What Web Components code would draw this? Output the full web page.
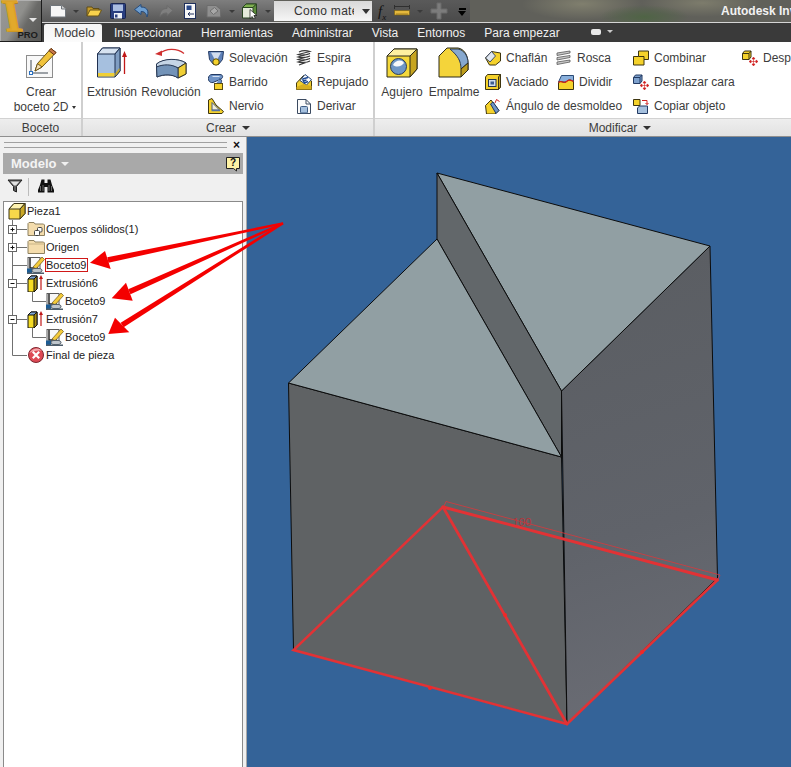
<!DOCTYPE html>
<html lang="es">
<head>
<meta charset="utf-8">
<title>Autodesk Inventor</title>
<style>
  html, body { margin: 0; padding: 0; height: 100%; overflow: hidden; background: #f0f0f0; }
  body { font: 12px "Liberation Sans", Arial, sans-serif; color: #3c3c3c; }
</style>
</head>
<body>
<inv-app>
  <inv-appbar slot="bar"></inv-appbar>

  <inv-ribbon slot="ribbon">
    <inv-ribbon-panel label="Boceto" width="81">
      <inv-big-button icon="sketch" pad="14" dropdown>Crear<br>boceto 2D</inv-big-button>
    </inv-ribbon-panel>

    <inv-ribbon-panel label="Crear" width="290" menu>
      <inv-big-button icon="extrude" width="48" left="5">Extrusión</inv-big-button>
      <inv-big-button icon="revolve" width="58" left="6">Revolución</inv-big-button>
      <inv-tool-grid columns="88px 72px" left="8">
        <inv-tool icon="loft">Solevación</inv-tool>
        <inv-tool icon="coil">Espira</inv-tool>
        <inv-tool icon="sweep">Barrido</inv-tool>
        <inv-tool icon="emboss">Repujado</inv-tool>
        <inv-tool icon="rib">Nervio</inv-tool>
        <inv-tool icon="derive">Derivar</inv-tool>
      </inv-tool-grid>
    </inv-ribbon-panel>

    <inv-ribbon-panel label="Modificar" width="490" menu>
      <inv-big-button icon="hole" width="42" left="6">Agujero</inv-big-button>
      <inv-big-button icon="fillet" width="50" left="6">Empalme</inv-big-button>
      <inv-tool-grid columns="71px 77px 109px 60px" left="6">
        <inv-tool icon="chamfer">Chaflán</inv-tool>
        <inv-tool icon="thread">Rosca</inv-tool>
        <inv-tool icon="combine">Combinar</inv-tool>
        <inv-tool icon="moveyellow">Desplazar cara</inv-tool>
        <inv-tool icon="shell" style="grid-column: 1">Vaciado</inv-tool>
        <inv-tool icon="split" style="margin-left: 2px">Dividir</inv-tool>
        <inv-tool icon="moveface">Desplazar cara</inv-tool>
        <inv-tool icon="draft" style="grid-column: 1 / span 2">Ángulo de desmoldeo</inv-tool>
        <inv-tool icon="copy">Copiar objeto</inv-tool>
      </inv-tool-grid>
    </inv-ribbon-panel>
  </inv-ribbon>

  <inv-browser slot="side">
    <inv-tree-row depth="0" icon="part">Pieza1</inv-tree-row>
    <inv-tree-row depth="1" icon="solids" toggle="+">Cuerpos sólidos(1)</inv-tree-row>
    <inv-tree-row depth="1" icon="folder" toggle="+">Origen</inv-tree-row>
    <inv-tree-row depth="1" icon="treesketch" selected>Boceto9</inv-tree-row>
    <inv-tree-row depth="1" icon="treeextrude" toggle="-">Extrusión6</inv-tree-row>
    <inv-tree-row depth="2" icon="treesketch">Boceto9</inv-tree-row>
    <inv-tree-row depth="1" icon="treeextrude" toggle="-">Extrusión7</inv-tree-row>
    <inv-tree-row depth="2" icon="treesketch">Boceto9</inv-tree-row>
    <inv-tree-row depth="1" icon="endpart" last>Final de pieza</inv-tree-row>
  </inv-browser>

  <inv-viewport slot="view"></inv-viewport>
  <inv-callouts slot="over"></inv-callouts>
</inv-app>

<script>
// icon library, all drawn on a 16, 18 or 32 unit box
const ICONS = {
  doc: [16, '<path d="M.5 2.500h11l4 3.500v8H.5z" fill="#f6f6f6" stroke="#70767c"/><path d="M11.500 2.500V6h4" fill="#d4d4d4" stroke="#70767c"/>'],
  open: [16, '<path d="M1 13V4h5l1 1.500h6V8" fill="#c49a2a" stroke="#5f4d18"/><path d="M1 13l3-6h11.500l-3 6z" fill="#f8d24c" stroke="#6a5518"/>'],
  save: [16, '<rect x=".5" y=".5" width="15" height="15" rx="1" fill="#2a3f80" stroke="#18244e"/><rect x="3" y="1.500" width="10" height="6.500" fill="#a9bce0"/><rect x="4" y="10" width="8" height="5.500" fill="#eef1f6"/><rect x="5" y="11.500" width="2.500" height="3" fill="#2a3f80"/>'],
  undo: [16, '<path d="M7 1.500L.5 6.500 7 11.500V8.500c3 0 5 1 6 5.500 2-5 1-10-6-10z" fill="#6d9ed0" stroke="#254a7a"/>'],
  redo: [16, '<path d="M9 2.500l6 5-6 5V10c-3 0-5 .5-7 3.500 0-5 2-8 7-8z" fill="#7f7f7f" stroke="#6b6b6b"/>'],
  update: [16, '<rect x="2.500" y=".5" width="11" height="15" fill="#f8f8f8" stroke="#20305c"/><rect x="4.500" y="2.500" width="5" height="4.500" fill="#2c4a8a"/><path d="M12 11H6M6 11l2-1.800M6 11l2 1.800" stroke="#20305c" fill="none"/>'],
  rebuild: [16, '<path d="M1 2.500h9l4.500 4v7.500H1z" fill="#8f8f8f" stroke="#6d6d6d"/><path d="M4 8l4.500-3.500 3.500 3.500-4.500 3.500z" fill="#a8a8a8" stroke="#707070"/>'],
  selectbox: [16, '<path d="M.5 4.500L4 1h10.500v9.500L11 15H.5z" fill="#e5eadb" stroke="#2a4522"/><path d="M.5 4.500L4 1h10.500L11 4.500z" fill="#7fb04f" stroke="#2a4522"/><path d="M11 4.500L14.500 1v9.500L11 15z" fill="#5c8c3a" stroke="#2a4522"/><path d="M8 6.500v9l2.200-2 1.500 2.500 1.500-.7-1.300-2.800h3z" fill="#fff" stroke="#111" stroke-width=".7"/>'],
  ruler: [16, '<path d="M.5 3.500h15M.5 2v4M15.500 2v4" stroke="#2f2f2f" fill="none"/><rect x=".5" y="7.500" width="15" height="4.500" fill="#e5b93c" stroke="#7a6010" stroke-width=".6"/><path d="M3 10v2M5 10v2M7 10v2M9 10v2M11 10v2M13 10v2" stroke="#7a5a10" stroke-width=".6"/>'],
  plus: [18, '<path d="M7 1h4v6h6v4h-6v6H7v-6H1V7h6z" fill="#7c7c7c" stroke="#6b6b6b"/>'],

  sketch: [32, '<rect x="1.500" y="8.500" width="26" height="22" fill="#f8f8f8" stroke="#8d8d8d"/><path d="M6 13v13h17" fill="none" stroke="#404a55"/><rect x="4.500" y="24.500" width="3" height="3" fill="#fff" stroke="#2a70c0"/><path d="M10 24l2.500-7.500L26 1.500l5 4L17 20z" fill="#f1c33b" stroke="#6a5315"/><path d="M10 24l2.500-7.500L17 20z" fill="#f3ddb0" stroke="#6a5315"/><path d="M26 1.500l5 4-2 2.200-5-4z" fill="#c97a4b" stroke="#6a3515"/>'],
  extrude: [32, '<path d="M1.500 7l5-6h17.500v23l-5 6H1.500z" fill="#a6c0df" stroke="#1f3050"/><path d="M1.500 7l5-6h17.500l-5 6z" fill="#d6e2f0" stroke="#1f3050"/><path d="M19 7l5-6v23l-5 6z" fill="#7f9dc2" stroke="#1f3050"/><path d="M2 26h16.500v3.500H2z" fill="#f0cf35"/><path d="M19.500 26l4-5v3l-4 5z" fill="#c9a820"/><path d="M28.500 27V8" stroke="#c01818" stroke-width="1.300"/><path d="M26 10l2.500-6 2.500 6z" fill="#c01818"/>'],
  revolve: [32, '<path d="M4 7C11 1 22 1 29 6.500" fill="none" stroke="#d03030" stroke-width="1.300"/><path d="M0 7l7-3.500V9z" fill="#d03030"/><path d="M1.500 17c6-5 22-6 29.500-1v11l-8 4c-5-4-14-4-21-1z" fill="#85a5c8" stroke="#2a3a55"/><path d="M1.500 17c7-6 22-6 29.500-1l-8 5c-6-3-14-3-21.500-1z" fill="#c5d5e6" stroke="#2a3a55"/><path d="M23 21l8-5v11l-8 4z" fill="#f0cf35" stroke="#3a3520"/><path d="M1.500 20c7-3 15-3 21.500 1v10c-6-4-14-4-21-1z" fill="#7393b8" stroke="#2a3a55"/>'],
  hole: [32, '<path d="M1 9l7-7h23v20l-7 8H1z" fill="#f4d83a" stroke="#2d2a18"/><path d="M1 9l7-7h23l-7 7z" fill="#fdf0a0" stroke="#2d2a18"/><path d="M24 9l7-7v20l-7 8z" fill="#c7a520" stroke="#2d2a18"/><circle cx="12.500" cy="19.500" r="8" fill="#6d96c6" stroke="#2d3d55"/><path d="M7 18c2-5 9-6 11-2-2 3-7 5-11 2z" fill="#f7f9fb"/>'],
  fillet: [32, '<path d="M1 30V9L9 1h11c6 1 10 7 10 15v7l-7 7z" fill="#f4d43a" stroke="#2d2a18"/><path d="M12 2h8c6 1 10 7 10 14l-7 6c0-8-3-13-11-20z" fill="#86a8cf" stroke="#2d3d55"/><path d="M23 22l7-6v7l-7 7z" fill="#bd9c1c" stroke="#2d2a18"/>'],

  loft: [16, '<path d="M.5 1.500h15l-1 8-4 5H5.500l-4-5z" fill="#5f82ba" stroke="#233a63"/><path d="M3 2.500h10L9.500 9h-3z" fill="#d2ddee"/><circle cx="8" cy="12" r="3.200" fill="#f5d22b" stroke="#5a4c10"/>'],
  sweep: [16, '<path d="M4 .5h8c3.500 0 3.500 4 0 5L5 8.500c-6 1-6-8-1-8z" fill="#6f93c6" stroke="#223a63"/><path d="M4.500 2.500h7" stroke="#d4e0f0"/><path d="M11 5c3 0 3.500 3 1 5H8" fill="#6f93c6" stroke="#223a63"/><rect x="6.500" y="9.500" width="8" height="6" fill="#f5d22b" stroke="#5a4c10"/>'],
  rib: [16, '<path d="M.5 15.500V2l3.500-1.500 4 6.500 7.500 6.500-1.500 2z" fill="#f5d22b" stroke="#3d3510"/><path d="M4 4.500V12h7.500z" fill="#efedd9" stroke="#4a5a78"/><path d="M3.500 12.500h8.500" stroke="#5573a4" stroke-width="1.500"/>'],
  coil: [16, '<path d="M3 2c3-1.500 8-1.500 11-.5L2 4.500c3 1 9 .5 12-1L2 7c3 1 9 .5 12-1L2 9.500c3 1 9 .5 12-1L2 12c3 1 9 .5 12-1L3 15" fill="none" stroke="#3a3a3a" stroke-width="1.200"/>'],
  emboss: [16, '<path d="M.5 15.500V9l7-7.500 8 5.500v8.500z" fill="#f1cf30" stroke="#463c10"/><path d="M4 6.500l5-6 6.500 5-5 5.500z" fill="#fff" stroke="#24467a"/><path d="M6.500 5l5.500-1.500M6.500 5l2 4 3.500-1.500M7.500 7l3-1" stroke="#1e4a94" stroke-width="1.500" fill="none"/><path d="M.5 13l7-3 8 2v3.500H.5z" fill="#d8b020"/>'],
  derive: [16, '<path d="M1.500 15.500v-14h8.500l4.500 4.500v9.500z" fill="#fbfbfb" stroke="#3b4a60"/><path d="M10 1.500v4.500h4.500" fill="none" stroke="#3b4a60"/><rect x="4.500" y="8.500" width="7" height="6.500" rx="1" fill="#a5c0de" stroke="#3f5d85"/>'],
  chamfer: [16, '<path d="M.5 8l6-6.500 9 1.500v8l-5 4h-6z" fill="#f5d22b" stroke="#3d3510"/><path d="M.5 8l6-6.500 4 4.500-5.500 6z" fill="#dfe6ef" stroke="#3d4a63"/>'],
  thread: [16, '<path d="M1 3l13-2v2L1 5.500zM1 7.500l13-2v2L1 10zM1 12l13-2v2L1 14.500z" fill="#c9c9c9" stroke="#575757" stroke-width=".8"/>'],
  shell: [16, '<path d="M.5 3l2-2.500h13V13l-2 2.500H.5z" fill="#f5d22b" stroke="#3d3510"/><path d="M13.500 3l2-2.500V13l-2 2.500z" fill="#c7a520" stroke="#3d3510"/><rect x="3.500" y="5.500" width="7.500" height="7" fill="#cfdced" stroke="#25364f"/><rect x="5.500" y="7.500" width="3.500" height="3" fill="#3f5f8f"/>'],
  split: [16, '<path d="M.5 8l3-6.500h12V8z" fill="#8ab0dc" stroke="#2a4a75"/><path d="M.5 15.500V8.500c3-3 5 2 8-1s5-1 7 0v8z" fill="#f5d22b" stroke="#3d3510"/><path d="M.5 8.500c3-3 5 2 8-1s5-1 7 0" fill="none" stroke="#d02020" stroke-width="1.300"/>'],
  draft: [16, '<path d="M.5 7.500L6 2l8 10.500-4 3.500H1.500z" fill="#f5d22b" stroke="#3d3510"/><path d="M5.500 6L8 4l6 8.500-3 3z" fill="#6f93c6" stroke="#223a63"/><path d="M10 5l1.500-3.500L14.500 3.500" fill="none" stroke="#d02020"/>'],
  combine: [16, '<path d="M5.500 1h10v8.500h-4.500v5.500H.5V6.500H5.500z" fill="#f5d22b" stroke="#3d3510"/><path d="M5.500 6.500H11v3" fill="none" stroke="#3d3510"/>'],
  moveface: [16, '<path d="M.5 3.500l2-2.500h6.500v6l-2 2.500H.5z" fill="#7da0cc" stroke="#223a63"/><path d="M.5 3.500h6.500v6M7 3.500L9 1" fill="none" stroke="#223a63"/><path d="M11.500 8v7M8 11.500h7M11.500 7l-1.500 2h3zM11.500 16l-1.500-2h3zM7 11.500l2-1.500v3zM16 11.500l-2-1.500v3z" fill="#d02020" stroke="#d02020" stroke-width=".6"/>'],
  moveyellow: [16, '<path d="M.5 3.500l2-2.500h6.500v6l-2 2.500H.5z" fill="#f5d22b" stroke="#3d3510"/><path d="M.5 3.500h6.500v6M7 3.500L9 1" fill="none" stroke="#3d3510"/><path d="M11.500 8v7M8 11.500h7M11.500 7l-1.500 2h3zM11.500 16l-1.500-2h3zM7 11.500l2-1.500v3zM16 11.500l-2-1.500v3z" fill="#d02020" stroke="#d02020" stroke-width=".6"/>'],
  copy: [16, '<path d="M.5 7.500V1.500h6.500v6z" fill="#f5d22b" stroke="#3d3510"/><path d="M4.500 10l2-2h8v7.500H4.500z" fill="#a5c0de" stroke="#223a63"/><path d="M9 2.500h5V6.500M14 6.500l-1.500-1.500M14 6.500l1.500-1.500" fill="none" stroke="#d02020"/>'],

  part: [18, '<path d="M1 7l5-5.500h11v10l-5 5.500H1z" fill="#f6d84a" stroke="#3b3518"/><path d="M1 7l5-5.500h11L12 7z" fill="#fdf2b0" stroke="#3b3518"/><path d="M12 7l5-5.500v10L12 17z" fill="#c9a827" stroke="#3b3518"/>'],
  folder: [18, '<path d="M1 15.500V3.500l1-1h5l1 1.500h8.500l1 1v10.500z" fill="#f4dcac" stroke="#8e8160"/><path d="M1 6h16.500" stroke="#c9b487"/>'],
  solids: [18, '<path d="M1 15.500V3.500l1-1h5l1 1.500h8.500l1 1v10.500z" fill="#f4dcac" stroke="#8e8160"/><rect x="10.500" y="7.500" width="4.500" height="4.500" fill="#fff" stroke="#444" rx="1"/><rect x="7.500" y="10.500" width="5" height="5" fill="#fff" stroke="#444" rx="1"/>'],
  treesketch: [18, '<rect x="1" y="1.500" width="12" height="13" fill="#f8f8f8" stroke="#5b5b5b"/><path d="M3 2v10h8" stroke="#282828" stroke-width="1.500" fill="none"/><path d="M6 11L15 1l2.500 2.500L9 13z" fill="#f4cb3a" stroke="#6a5315" stroke-width=".7"/><rect x="0" y="12.500" width="5" height="5" fill="#1c5c94"/><ellipse cx="10" cy="14.500" rx="5" ry="2.200" fill="#bfc6cc" stroke="#4a5560"/><rect x="0" y="16.500" width="17" height="1.500" fill="#4d5d6b"/>'],
  treeextrude: [18, '<path d="M1 5l3-3h6v13l-3 3H1z" fill="#f5dc25" stroke="#111"/><path d="M1 5l3-3h6L7 5z" fill="#7da7d6" stroke="#111"/><path d="M7 5l3-3v13l-3 3z" fill="#a58a10" stroke="#111"/><path d="M14 16V4" stroke="#c01818" stroke-width="1.200"/><path d="M12 5l2-4 2 4z" fill="#c01818"/>'],
  endpart: [18, '<circle cx="9" cy="9" r="7.500" fill="#dd4a55" stroke="#7d2730"/><path d="M2.500 7C5 2 12 1 15 5c-4-1-9 0-12.500 2z" fill="#f3a9ae"/><path d="M5.800 5.800l6.400 6.400M12.200 5.800l-6.400 6.400" stroke="#fff" stroke-width="2.200"/>'],
  filter: [16, '<path d="M1 2h14L9.500 8.500V14l-3-1.500v-4z" fill="#5b5b5b" stroke="#222"/><path d="M3.500 3.500h9l-3.500 4h-2z" fill="#e2e2e2"/>'],
  binoculars: [16, '<path d="M3.500 1.500h3v3.500h3V1.500h3l1.500 5.500 2 5v2.500H9.500V9h-3v5.500H0V12l2-5z" fill="#111"/><path d="M2.500 8v5M5 7v6M11 7v6M13.500 8v5" stroke="#8f8f8f" stroke-width=".7"/>'],
  help: [16, '<path d="M1.500 1.500h13v11h-3v2.500l-3-2.500h-7z" fill="#fff3a5" stroke="#222"/>'],
};

class InvIcon extends HTMLElement {
  connectedCallback() {
    const [box, body] = ICONS[this.getAttribute('name')] || [16, ''];
    const shadow = this.attachShadow({ mode: 'open' });
    shadow.innerHTML = `
      <style>
        :host { display: block; width: ${box}px; height: ${box}px; flex: none; }
        svg { display: block; }
      </style>
      <svg width="${box}" height="${box}" viewBox="0 0 ${box} ${box}">${body}</svg>
    `;
  }
}
customElements.define('inv-icon', InvIcon);

class InvApp extends HTMLElement {
  connectedCallback() {
    const shadow = this.attachShadow({ mode: 'open' });
    shadow.innerHTML = `
      <style>
        :host { display: flex; flex-direction: column; width: 791px; height: 767px; overflow: hidden; }
        .main { position: relative; flex: 1; display: flex; min-height: 0; }
        ::slotted([slot="over"]) { position: absolute; inset: 0; pointer-events: none; }
      </style>
      <slot name="bar"></slot>
      <slot name="ribbon"></slot>
      <div class="main">
        <slot name="side"></slot>
        <slot name="view"></slot>
        <slot name="over"></slot>
      </div>
    `;
  }
}
customElements.define('inv-app', InvApp);

class InvAppbar extends HTMLElement {
  connectedCallback() {
    const shadow = this.attachShadow({ mode: 'open' });
    const caret = '<i class="caret"></i>';
    const tabs = ['Inspeccionar', 'Herramientas', 'Administrar', 'Vista', 'Entornos', 'Para empezar'];
    shadow.innerHTML = `
      <style>
        :host { display: grid; grid-template-columns: 42px 1fr; grid-template-rows: 23px 19px; height: 42px; background: #3a3a3a; flex: none; }
        .logo { grid-row: 1 / span 2; position: relative; overflow: hidden; box-sizing: border-box;
          background: linear-gradient(120deg, #9a9a98 0%, #8f8f8c 45%, #6a6a68 62%, #585856 100%);
          border-right: 1px solid #1c1c1c; border-bottom: 1px solid #1c1c1c; box-shadow: inset 1px 1px 0 #b0b0b0; }
        .glyph { position: absolute; left: 3px; top: -8px; font: bold 46px/48px "Liberation Serif", serif; color: #e2a92c;
          -webkit-text-stroke: 1.500px #dda326; transform: skewX(10deg); text-shadow: 1px 1px 0 #7c5a10; }
        .pro { position: absolute; right: 3px; bottom: 1px; font: bold 9.500px/11px "Liberation Sans", sans-serif; color: #1c1c1c; }
        .logo .drop { position: absolute; right: 4px; top: 18px; border: 4px solid transparent; border-top: 4px solid #e5e5e5; border-bottom: 0; }
        .quick { display: flex; align-items: center; height: 23px; box-sizing: border-box; border-bottom: 1px solid #d5d5d5; overflow: hidden; min-width: 0;
          background:
            radial-gradient(ellipse 45px 12px at 602px 17px, #4f6445 0%, rgba(79,100,69,0) 100%),
            radial-gradient(ellipse 60px 16px at 540px 4px, #807f6e 0%, rgba(128,127,110,0) 100%),
            radial-gradient(ellipse 60px 14px at 660px 3px, #7d7c6c 0%, rgba(125,124,108,0) 100%),
            #60605a; }
        .tools { display: flex; align-items: center; height: 22px; padding-left: 8px; width: 232px; box-sizing: border-box; gap: 8px; flex: none;
          background: linear-gradient(#7e7e7e, #575757); }
        .caret { display: block; border: 3px solid transparent; border-top: 3px solid #3a3a3a; border-bottom: 0; flex: none; margin: 0 -1px; }
        .combo { width: 98px; height: 20px; box-sizing: border-box; flex: none; position: relative; padding-left: 20px;
          background: linear-gradient(#d8d8d8, #f6f6f6); line-height: 20px; color: #333; overflow: hidden; white-space: nowrap; letter-spacing: .3px; }
        .combo .label { display: block; width: 60px; overflow: hidden; }
        .combo::after { content: ""; position: absolute; right: 2px; top: 8px; border: 4px solid transparent; border-top: 5px solid #333; border-bottom: 0; }
        .tools2 { display: flex; align-items: center; gap: 8px; height: 22px; padding: 0 4px 0 6px; width: 98px; box-sizing: border-box; flex: none; background: linear-gradient(#5a5a5a, #4a4a4a); }
        .fx { font: italic 15px/16px "Liberation Serif", serif; color: #111; width: 16px; white-space: nowrap; }
        .fx sub { font-size: 9px; line-height: 0; }
        .more { border-top: 2px solid #000; width: 7px; height: 7px; box-sizing: border-box; position: relative; flex: none; margin-left: 3px; }
        .more::after { content: ""; position: absolute; left: -1px; top: 1px; border: 4px solid transparent; border-top: 5px solid #000; border-bottom: 0; }
        .title { margin-left: auto; white-space: nowrap; color: #f2f2f2; font: bold 12px/22px "Liberation Sans", sans-serif; width: 70px; flex: none; overflow: hidden; }
        .tabs { display: flex; align-items: flex-end; height: 19px; color: #f0f0f0; white-space: nowrap; overflow: hidden; }
        .tab { line-height: 18px; margin-left: 19px; }
        .tab.active { margin-left: 2px; padding: 0 8px 0 10px; height: 18px; width: 40px; background: linear-gradient(#f4f4f4, #fbfbfb); color: #3e3e3e; border-radius: 2px 2px 0 0; font-size: 12.500px; }
        .tab.active + .tab { margin-left: 12px; }
        .pill { margin: 0 0 7px 31px; width: 10px; height: 6px; border-radius: 2px; background: #e8e8e8; position: relative; }
        .pill::after { content: ""; position: absolute; left: 16px; top: 1px; border: 3px solid transparent; border-top: 3px solid #ccc; border-bottom: 0; }
      </style>
      <div class="logo"><span class="glyph">I</span><span class="drop"></span><span class="pro">PRO</span></div>
      <div class="quick">
        <div class="tools">
          <inv-icon name="doc"></inv-icon>${caret}
          <inv-icon name="open"></inv-icon>
          <inv-icon name="save"></inv-icon>
          <inv-icon name="undo"></inv-icon>
          <inv-icon name="redo"></inv-icon>
          <inv-icon name="update"></inv-icon>
          <inv-icon name="rebuild"></inv-icon>${caret}
          <inv-icon name="selectbox"></inv-icon>${caret}
        </div>
        <div class="combo"><span class="label">Como mate</span></div>
        <div class="tools2">
          <span class="fx">f<sub>x</sub></span>
          <inv-icon name="ruler"></inv-icon>${caret}
          <inv-icon name="plus"></inv-icon>
          <span class="more"></span>
        </div>
        <div class="title">Autodesk Inventor</div>
      </div>
      <div class="tabs">
        <div class="tab active">Modelo</div>
        ${tabs.map((t) => `<div class="tab">${t}</div>`).join('')}
        <div class="pill"></div>
      </div>
    `;
  }
}
customElements.define('inv-appbar', InvAppbar);

class InvRibbon extends HTMLElement {
  connectedCallback() {
    const shadow = this.attachShadow({ mode: 'open' });
    shadow.innerHTML = `
      <style>
        :host { display: flex; height: 95px; flex: none; overflow: hidden; gap: 2px; background: #cfcfcf; box-sizing: border-box; border-bottom: 1px solid #8f8f8f; }
      </style>
      <slot></slot>
    `;
  }
}
customElements.define('inv-ribbon', InvRibbon);

class InvRibbonPanel extends HTMLElement {
  connectedCallback() {
    const label = this.getAttribute('label');
    const menu = this.hasAttribute('menu');
    const shadow = this.attachShadow({ mode: 'open' });
    shadow.innerHTML = `
      <style>
        :host { display: flex; flex-direction: column; flex: none; width: ${this.getAttribute('width')}px; background: #fff; }
        .body { flex: 1; display: flex; align-items: flex-start; padding-top: 4px; box-sizing: border-box; min-height: 0; }
        .foot { height: 18px; border-top: 1px solid #d2d2d2; background: linear-gradient(#eeeeee, #e2e2e2); display: flex; align-items: center; justify-content: center; gap: 6px; color: #3c3c3c; box-sizing: border-box; flex: none; }
        .arrow { border: 4px solid transparent; border-top: 4px solid #333; border-bottom: 0; }
      </style>
      <div class="body"><slot></slot></div>
      <div class="foot"><span>${label}</span>${menu ? '<span class="arrow"></span>' : ''}</div>
    `;
  }
}
customElements.define('inv-ribbon-panel', InvRibbonPanel);

class InvBigButton extends HTMLElement {
  connectedCallback() {
    const width = this.getAttribute('width');
    const left = this.getAttribute('left') || 0;
    const pad = this.getAttribute('pad');
    const shadow = this.attachShadow({ mode: 'open' });
    shadow.innerHTML = `
      <style>
        :host { display: flex; flex-direction: column; align-items: center; flex: none; margin-left: ${left}px; padding-top: 1px;
          ${width ? `width: ${width}px;` : `margin-left: ${pad}px; width: 54px;`} }
        .label { margin-top: 6px; line-height: 15px; text-align: center; white-space: nowrap; position: relative; }
        .drop { position: absolute; right: -8px; bottom: 6px; border: 2.500px solid transparent; border-top: 3px solid #333; border-bottom: 0; }
      </style>
      <inv-icon name="${this.getAttribute('icon')}"></inv-icon>
      <div class="label"><slot></slot>${this.hasAttribute('dropdown') ? '<span class="drop"></span>' : ''}</div>
    `;
  }
}
customElements.define('inv-big-button', InvBigButton);

class InvToolGrid extends HTMLElement {
  connectedCallback() {
    const shadow = this.attachShadow({ mode: 'open' });
    shadow.innerHTML = `
      <style>
        :host { display: grid; grid-template-columns: ${this.getAttribute('columns')}; grid-auto-rows: 24px; flex: none; margin-left: ${this.getAttribute('left') || 0}px; }
      </style>
      <slot></slot>
    `;
  }
}
customElements.define('inv-tool-grid', InvToolGrid);

class InvTool extends HTMLElement {
  connectedCallback() {
    const shadow = this.attachShadow({ mode: 'open' });
    shadow.innerHTML = `
      <style>
        :host { display: flex; align-items: center; gap: 5px; white-space: nowrap; height: 24px; }
      </style>
      <inv-icon name="${this.getAttribute('icon')}"></inv-icon>
      <slot></slot>
    `;
  }
}
customElements.define('inv-tool', InvTool);

class InvBrowser extends HTMLElement {
  connectedCallback() {
    const shadow = this.attachShadow({ mode: 'open' });
    shadow.innerHTML = `
      <style>
        :host { display: flex; flex-direction: column; flex: none; width: 247px; background: #f0f0f0; box-sizing: border-box; padding: 0 3px 0 3px; border-right: 1px solid #a8a8a8; }
        .grip { display: flex; align-items: center; height: 16px; gap: 5px; }
        .lines { flex: 1; height: 4px; margin: 0 0 0 1px; border-top: 1px solid #a0a0a0; border-bottom: 1px solid #a0a0a0; }
        .close { width: 9px; margin: 0 2px 0 0; font: bold 12px/12px "Liberation Sans", sans-serif; color: #111; text-align: center; }
        .head { display: flex; align-items: center; height: 21px; background: #a9a9a9; color: #f4f4f4; font: bold 13px/21px "Liberation Sans", sans-serif; padding: 0 2px 0 8px; gap: 4px; }
        .head .arrow { border: 4px solid transparent; border-top: 4.500px solid #f0f0f0; border-bottom: 0; margin-top: 1px; }
        .help { margin-left: auto; position: relative; width: 16px; height: 16px; }
        .help b { position: absolute; inset: 0; text-align: center; font: bold 10px/13px "Liberation Sans", sans-serif; color: #111; }
        .bar { display: flex; align-items: flex-start; height: 27px; padding: 4px 0 0 4px; box-sizing: border-box; }
        .sep { width: 1px; height: 18px; background: #bcbcbc; margin: 0 9px 0 5px; }
        .tree { flex: 1; background: #fff; border: 1px solid #8a8a8a; border-bottom: 0; }
      </style>
      <div class="grip"><div class="lines"></div><div class="close">×</div></div>
      <div class="head"><span>Modelo</span><span class="arrow"></span>
        <span class="help"><inv-icon name="help"></inv-icon><b>?</b></span></div>
      <div class="bar"><inv-icon name="filter"></inv-icon><div class="sep"></div><inv-icon name="binoculars"></inv-icon></div>
      <div class="tree"><slot></slot></div>
    `;
  }
}
customElements.define('inv-browser', InvBrowser);

class InvTreeRow extends HTMLElement {
  connectedCallback() {
    const depth = Number(this.getAttribute('depth'));
    const toggle = this.getAttribute('toggle');
    // gutter spans from the tree's inner edge up to the icon of this row
    const gutter = [4, 23, 42][depth];
    let lines = '';
    if (depth > 0) {
      lines += `<path d="M8.500 0V${this.hasAttribute('last') ? 9.500 : 18}" stroke="#707070" fill="none"/>`;
    }
    if (depth === 1) lines += '<path d="M8.500 9.500H23" stroke="#707070" fill="none"/>';
    if (depth === 2) lines += '<path d="M28.500 0V9.500H42" stroke="#707070" fill="none"/>';
    if (toggle) {
      lines += '<rect x="4.500" y="5.500" width="8" height="8" fill="#fff" stroke="#666"/><path d="M6.500 9.500h4" stroke="#111"/>';
      if (toggle === '+') lines += '<path d="M8.500 7.500v4" stroke="#111"/>';
    }
    const shadow = this.attachShadow({ mode: 'open' });
    shadow.innerHTML = `
      <style>
        :host { display: flex; align-items: center; height: 18px; white-space: nowrap; color: #222; font-size: 11px; }
        svg { display: block; flex: none; }
        .text { padding: 0 1px 0 0; line-height: 12px; border: 1px solid transparent; }
        :host([selected]) .text { border-color: #d01818; }
      </style>
      <svg width="${gutter}" height="18" viewBox="0 0 ${gutter} 18">${lines}</svg>
      <inv-icon name="${this.getAttribute('icon')}"></inv-icon>
      <span class="text"><slot></slot></span>
    `;
  }
}
customElements.define('inv-tree-row', InvTreeRow);

class InvViewport extends HTMLElement {
  connectedCallback() {
    const shadow = this.attachShadow({ mode: 'open' });
    shadow.innerHTML = `
      <style>
        :host { display: block; flex: 1; min-width: 0; background: #346398; }
        svg { display: block; }
        .edge { stroke: #0c0c0c; stroke-width: 1; stroke-linejoin: round; }
        .red { stroke: #e23235; fill: none; stroke-width: 2.500; stroke-linecap: round; }
      </style>
      <svg width="544" height="630" viewBox="247 137 544 630">
        <defs>
          <linearGradient id="wall" x1="560" y1="300" x2="700" y2="720" gradientUnits="userSpaceOnUse">
            <stop offset="0" stop-color="#5b5e63"/>
            <stop offset=".55" stop-color="#60636a"/>
            <stop offset="1" stop-color="#6b6d75"/>
          </linearGradient>
        </defs>
        <path class="edge" fill="#5f6264" d="M288.500 383L561.500 457 567 724 293.500 650z"/>
        <path class="edge" fill="url(#wall)" d="M561.500 391L710 246 717.500 578 567 724z"/>
        <path class="edge" fill="#919fa3" d="M437 173L710 246 561.500 391z"/>
        <path class="edge" fill="#62676a" d="M437 173V239L561.500 457V391z"/>
        <path class="edge" fill="#919fa3" d="M437 239L561.500 457 288.500 383z"/>
        <path stroke="#d8393c" stroke-width=".8" fill="none" d="M446 501.500L720 575M444 506L446 501.500M718 579L720 575"/>
        <text x="513" y="526" font-family="Liberation Sans, sans-serif" font-size="11" fill="#b8343a">100</text>
        <path class="red" style="stroke-width: 3" d="M443 507L717.500 580"/>
        <path class="red" d="M443 507L293.500 650 567 724 717.500 580"/>
        <path class="red" style="stroke-width: 2.800" d="M443 507L567 724"/>
        <g fill="#f02828">
          <circle cx="430" cy="688" r="2"/>
          <circle cx="642" cy="652" r="2"/>
          <circle cx="505" cy="615" r="2"/>
        </g>
      </svg>
    `;
  }
}
customElements.define('inv-viewport', InvViewport);

class InvCallouts extends HTMLElement {
  connectedCallback() {
    const shadow = this.attachShadow({ mode: 'open' });
    const apex = [283, 223.300];
    const arrows = [
      [[90, 262.700], [105, 251], [110.700, 269]],
      [[111.700, 298.300], [126, 282.700], [132.700, 300.700]],
      [[108.300, 334], [115, 317.700], [129.300, 332.300]],
    ];
    // shaft narrows from the head towards the apex
    const shaft = ([, a, b]) => {
      const cx = (a[0] + b[0]) / 2;
      const cy = (a[1] + b[1]) / 2;
      const dx = apex[0] - cx;
      const dy = apex[1] - cy;
      const len = Math.hypot(dx, dy);
      const nx = -dy / len;
      const ny = dx / len;
      return `M${apex[0] + nx} ${apex[1] + ny}L${cx + nx * 2.800} ${cy + ny * 2.800}L${cx - nx * 2.800} ${cy - ny * 2.800}L${apex[0] - nx} ${apex[1] - ny}z`;
    };
    shadow.innerHTML = `
      <style>
        :host { display: block; }
        svg { display: block; }
      </style>
      <svg width="791" height="630" viewBox="0 137 791 630">
        ${arrows.map((a) => `
          <path d="${shaft(a)}" fill="#f40000"/>
          <path d="M${a[0].join(' ')}L${a[1].join(' ')}L${a[2].join(' ')}z" fill="#f40000"/>
        `).join('')}
      </svg>
    `;
  }
}
customElements.define('inv-callouts', InvCallouts);
</script>
</body>
</html>
